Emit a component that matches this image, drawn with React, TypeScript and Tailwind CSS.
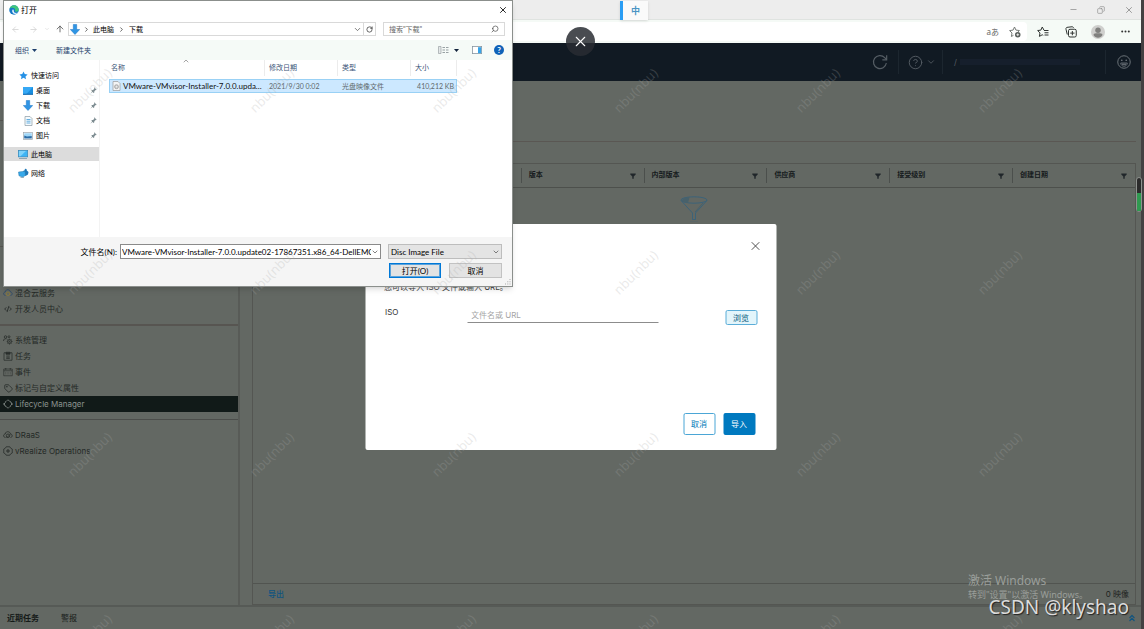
import type { ReactNode } from "react";
import {
  ArrowLeft,
  ArrowRight,
  ArrowUp,
  ChevronDown,
  ChevronRight,
  ChevronUp,
  ChevronsUp,
  CircleHelp,
  CodeXml,
  Copy,
  Minus,
  RotateCcw,
  Search,
  Tag,
  X,
} from "lucide-react";

const UI_FONT = "font-['Noto_Sans','Noto_Sans_CJK_SC',sans-serif]";
const PICKER_FONT = "font-['Lato','Noto_Sans_CJK_SC',sans-serif]";
const APP_FONT = "font-['Inter','Noto_Sans_CJK_SC',sans-serif]";

/* ---------- small drawings ---------- */

function EdgeLogo() {
  return (
    <svg viewBox="0 0 20 20" className="size-[10px]">
      <circle cx="10" cy="10" r="9.5" fill="#1478c8" />
      <path d="M1 8C2 3 6 .5 10 .5c5.500 0 9.500 4 9.500 8.500 0 3-2.500 4.500-5 4.500-2 0-3-1-2-2.500C13 8 10 5.500 7 5.500 4 5.500 2 6.500 1 8z" fill="#3fc67c" />
      <path d="M7.500 9c-2.500 3-.5 8.500 4.500 9 2.500.2 5-1.500 6-3-4 2-9 1-8.500-4 .1-1-1-2.500-2-2z" fill="#e8f6ff" />
    </svg>
  );
}

function BlueArrow() {
  return (
    <svg viewBox="0 0 10 11" className="h-[11px] w-[10px]">
      <path d="M3.300.5h3.400v5H9.700L5 10.500.3 5.500h3z" fill="#2f95e4" stroke="#1c74c4" strokeWidth=".5" />
    </svg>
  );
}

function BlueStar() {
  return (
    <svg viewBox="0 0 24 24" className="size-[9px]">
      <path d="M12 1l3.300 7.200 7.700.9-5.700 5.300 1.500 7.700L12 18.200 5.200 22l1.500-7.600L1 9.100l7.700-.9z" fill="#2691e6" />
    </svg>
  );
}

function DesktopIcon() {
  return (
    <svg viewBox="0 0 10 8" className="h-[8px] w-[10px]">
      <rect width="10" height="7.500" fill="#1b8fe0" />
      <path d="M0 0h10L3 7.500H0z" fill="#36a8f4" />
      <rect y="6.800" width="10" height=".9" fill="#0c5fa5" />
    </svg>
  );
}

function DocIcon() {
  return (
    <svg viewBox="0 0 9 10" className="h-[10px] w-[9px]">
      <path d="M1 .5h5L8 2.500v7H1z" fill="#f5fafd" stroke="#8a9ba5" strokeWidth=".7" />
      <path d="M2.500 3.500h4M2.500 5.200h4M2.500 7h4" stroke="#3f9bd8" strokeWidth=".8" />
    </svg>
  );
}

function PictureIcon() {
  return (
    <svg viewBox="0 0 10 8" className="h-[8px] w-[10px]">
      <rect x=".4" y=".4" width="9.200" height="7" fill="#fff" stroke="#9aa5ad" strokeWidth=".7" />
      <path d="M1.200 1.200h7.600V4L5 5.500 1.200 4z" fill="#9fd6f7" />
      <path d="M1.200 3.500L4 4.500l4.800-.5v2.600H1.200z" fill="#2a6da8" />
    </svg>
  );
}

function ComputerIcon() {
  return (
    <svg viewBox="0 0 10 9" className="h-[9px] w-[10px]">
      <rect x=".3" y=".3" width="9.400" height="6.600" fill="#3db4f5" stroke="#3380b0" strokeWidth=".6" />
      <path d="M1 1h7L2.500 6.300H1z" fill="#7dd2fb" />
      <path d="M1 8.500h8" stroke="#7a97a8" strokeWidth=".8" />
    </svg>
  );
}

function NetworkIcon() {
  return (
    <svg viewBox="0 0 11 10" className="h-[10px] w-[11px]">
      <path d="M5 3l1.500-.5.5-1.700 1.500.2.3 1.500L10.500 4 10 6.500 7.500 8z" fill="#2079b8" />
      <path d="M.5 4l6.500-.8.500 4.300-3 1.500L1 7.800z" fill="#37a9ea" stroke="#2a78aa" strokeWidth=".5" />
      <path d="M2.500 9.500h3.500" stroke="#7a97a8" strokeWidth=".7" />
    </svg>
  );
}

function PinIcon() {
  return (
    <svg viewBox="0 0 10 10" className="size-[7px]">
      <path d="M6 .5L9.500 4l-1 .5-.6-.2-1.800 2-.1 1.700-.9.500L2 5.400l.7-1 1.600-.1 1.900-1.900-.5-.9zM3.300 6L4 6.800.5 9.500z" fill="#7e8d92" />
    </svg>
  );
}

function IsoFileIcon() {
  return (
    <svg viewBox="0 0 9 10" className="h-[10px] w-[9px] shrink-0">
      <path d="M1 .5h5L8 2.500v7H1z" fill="#f4f4f4" stroke="#9b9b9b" strokeWidth=".7" />
      <circle cx="4.500" cy="5.700" r="2" fill="#d0d0d0" stroke="#8f8f8f" strokeWidth=".6" />
      <circle cx="4.500" cy="5.700" r=".5" fill="#fff" />
    </svg>
  );
}

function FilterGlyph() {
  return (
    <svg viewBox="0 0 6 7" className="h-[7px] w-[6px]">
      <path d="M.3 1.500h5.400v1L3.700 4.500v2.300H2.300V4.500L.3 2.500z" fill="#20262a" />
    </svg>
  );
}

function BigFunnel() {
  return (
    <svg viewBox="0 0 28 26" className="h-[26px] w-[28px]" fill="none" stroke="#3c6379" strokeWidth="1">
      <ellipse cx="14" cy="4" rx="13" ry="3.200" />
      <path d="M1 4.500l11.500 12.500v6.500h3V17L27 4.500" />
      <path d="M1.500 4.500C3 2.500 6 1.300 9.500 1.300L8 7c-3-.3-5.500-1-6.500-2.500z" fill="#48616b" stroke="none" />
      <path d="M23 7l-8 9" stroke="#48616b" />
      <path d="M10 25.500h8" stroke="#566568" strokeWidth=".6" />
    </svg>
  );
}

function StarPlus() {
  return (
    <svg viewBox="0 0 24 24" className="size-[12px]" fill="none" stroke="#6f7471" strokeWidth="1.900">
      <path d="M11 2l2.900 6.200 6.900.9-3 3M9 18.500L4.800 21l1.200-7L1.200 9.200l6.900-1L11 2" strokeLinejoin="round" />
      <circle cx="17.500" cy="17.500" r="5.500" fill="#555b58" stroke="none" />
      <path d="M17.500 14.700v5.600M14.700 17.500h5.600" stroke="#fff" strokeWidth="1.600" />
    </svg>
  );
}

function StarList() {
  return (
    <svg viewBox="0 0 24 24" className="size-[12px]" fill="none" stroke="#2f3331" strokeWidth="2" strokeLinejoin="round">
      <path d="M14 8.500L10.500 2 7.800 8.200l-6.500.9 4.700 4.700-1.200 7 5.700-3.300 2 1.200" />
      <path d="M14 9h9M15 13.500h8M15 18h8" />
    </svg>
  );
}

function CollectionsIcon() {
  return (
    <svg viewBox="0 0 24 24" className="size-[12px]" fill="none" stroke="#2f3331" strokeWidth="2">
      <path d="M4.500 17L2 6.500C1.500 4.500 2.500 3 4 2.700L14 1.500c1.500-.2 2.500.7 3 2.500" />
      <rect x="7" y="6.500" width="15.500" height="15.500" rx="3" />
      <path d="M14.700 10v8.500M10.500 14.200H19" />
    </svg>
  );
}

function AvatarIcon() {
  return (
    <svg viewBox="0 0 28 28" className="size-[14px]">
      <circle cx="14" cy="14" r="14" fill="#cfcfcd" />
      <circle cx="14" cy="10.500" r="5.500" fill="#80807e" />
      <path d="M5 20c0-3 4-3.500 9-3.500s9 .5 9 3.500c-2 3.500-5 5.500-9 5.500s-7-2-9-5.500z" fill="#80807e" />
    </svg>
  );
}

function RefreshIcon() {
  return (
    <svg viewBox="0 0 24 24" className="size-[16px]" fill="none" stroke="#555d64" strokeWidth="1.800">
      <path d="M21.500 13.500A9.700 9.700 0 1 1 19 5.500L21.800 8.500" />
      <path d="M22 2v6.800h-6.500" />
    </svg>
  );
}

function SmileIcon() {
  return (
    <svg viewBox="0 0 28 28" className="size-[14px]" fill="none" stroke="#6a7177" strokeWidth="2">
      <circle cx="14" cy="14" r="12.500" />
      <path d="M7.500 16h13c0 4-3 6.500-6.500 6.500S7.500 20 7.500 16z" strokeWidth="1.800" />
      <path d="M10 18.500h8" strokeWidth="2.500" />
      <circle cx="9.500" cy="10.500" r="1.700" fill="#6a7177" stroke="none" />
      <circle cx="18.500" cy="10.500" r="1.700" fill="#6a7177" stroke="none" />
    </svg>
  );
}

function CloudIcon({ color }: { color?: boolean }) {
  return (
    <svg viewBox="0 0 20 16" className="h-[8px] w-[10px]" fill="none" strokeWidth="1.700">
      <path d="M5 13C0 12.500 0 6.500 4.500 6 5 2 8 1 10.500 1.500 13 2 14.500 3.500 15 6c4.500.5 4.500 6.500 0 7" stroke={color ? "#2f4c6c" : "#2a2f2c"} />
      <circle cx="10" cy="9.500" r="3.500" stroke={color ? "#8a7a3a" : "#2a2f2c"} />
      {!color && <path d="M7 14l7-7" stroke="#2a2f2c" />}
    </svg>
  );
}

function AdminIcon() {
  return (
    <svg viewBox="0 0 20 20" className="size-[10px]" fill="none" stroke="#2a2f2c" strokeWidth="1.600">
      <circle cx="5" cy="4" r="2.500" />
      <circle cx="12" cy="3.500" r="2" />
      <path d="M1 12c0-4 3-5 6-4.500" />
      <circle cx="13" cy="13" r="4" />
      <circle cx="13" cy="13" r="1" />
      <path d="M13 7.500V9M13 17v2M7.500 13H9M17 13h2M9 9l1.500 1.500M17 17l-1.500-1.500M17 9l-1.500 1.500M9 17l1.500-1.500" />
    </svg>
  );
}

function TaskIcon() {
  return (
    <svg viewBox="0 0 20 20" className="size-[10px]" fill="none" stroke="#2a2f2c" strokeWidth="1.500">
      <path d="M6 3.500H2v15h16v-15h-4" />
      <path d="M6 2.500h8v4H6z" fill="#2a2f2c" />
      <path d="M6.500 10h7M6.500 12.500h7M6.500 15h7" />
    </svg>
  );
}

function EventIcon() {
  return (
    <svg viewBox="0 0 20 20" className="size-[10px]" fill="none" stroke="#2a2f2c" strokeWidth="1.300">
      <path d="M1.500 4h17v13.500h-17zM1.500 7.500h17" />
      <path d="M5.500 2v3.500M14.500 2v3.500" strokeWidth="1.800" />
      <path d="M5.500 10v5M10 10v5M14.500 10v5" stroke="#444946" />
    </svg>
  );
}

function LifecycleIcon() {
  return (
    <svg viewBox="0 0 20 20" className="size-[10px]" fill="none" stroke="#8b938f" strokeWidth="1.600">
      <path d="M8 3.500L10 1.500l3 3c2 0 2.500.7 2.200 2.300L18.500 10l-2 2M17 7l1.500 3-3.500 3.500c.5 1.500-.5 2.200-2 2.200M12 16.500l-2 2-3-3c-2 0-2.500-.7-2.200-2.300L1.500 10l2-2M3 13l-1.500-3L5 6.500C4.500 5 5.500 4.300 7 4.300" />
    </svg>
  );
}

function VRealizeIcon() {
  return (
    <svg viewBox="0 0 20 20" className="size-[10px]" fill="none" stroke="#2a2f2c" strokeWidth="1.600">
      <path d="M6.500 1.500h7l1.500 2.500 3.500 2v8L15 16l-1.500 2.500h-7L5 16l-3.500-2V6L5 4z" />
      <path d="M10 6v8M6 10h8" strokeWidth="2" />
    </svg>
  );
}

/* ---------- browser frame ---------- */

function BrowserBars() {
  return (
    <div className="shrink-0">
      <div className="flex h-5 items-center justify-end gap-1 border-b border-[#dfe3e0] bg-[#ededed] text-[#8c8c8c]">
        <button aria-label="最小化" className="flex w-6 justify-center"><Minus size={9} /></button>
        <button aria-label="还原" className="flex w-6 justify-center"><Copy size={8} className="-scale-x-100" /></button>
        <button aria-label="关闭窗口" className="flex w-6 justify-center"><X size={10} /></button>
      </div>
      <div className="flex h-[23px] items-center bg-[#f5faf6] pr-[2px]">
        <div className="flex h-[19px] flex-1 items-center justify-end rounded-r-sm bg-white">
          <button className={`${UI_FONT} px-[4px] text-[8px] leading-none text-[#666]`}>aあ</button>
          <button aria-label="添加到收藏夹" className="flex w-6 justify-center"><StarPlus /></button>
        </div>
        <div className="flex pl-[2px]">
          <button aria-label="收藏夹" className="flex w-7 items-center justify-center"><StarList /></button>
          <button aria-label="集锦" className="flex w-[27px] items-center justify-center"><CollectionsIcon /></button>
          <button aria-label="用户" className="flex w-7 items-center justify-center"><AvatarIcon /></button>
          <button aria-label="更多" className="flex w-[27px] items-center justify-center">
            <svg viewBox="0 0 9 3" className="h-[3px] w-[9px]" fill="#333">
              <circle cx="1.200" cy="1.500" r="1" />
              <circle cx="4.500" cy="1.500" r="1" />
              <circle cx="7.800" cy="1.500" r="1" />
            </svg>
          </button>
        </div>
      </div>
    </div>
  );
}

function AppHeader() {
  return (
    <header className="flex h-[38px] shrink-0 items-center justify-end bg-[#111a23] text-[#555d64]">
      <button aria-label="刷新" className="flex w-9 justify-center"><RefreshIcon /></button>
      <div className="flex h-6 w-11 items-center justify-center gap-[3px] border-l border-[#1c262f] pl-[3px]">
        <CircleHelp size={15} strokeWidth={1.5} />
        <ChevronDown size={10} />
      </div>
      <div className="flex h-6 w-[163px] items-center gap-[3px] border-l border-[#1c262f] pl-[11px] text-[8px]">
        <span>/</span>
        <span className="h-[6px] w-[120px] bg-[#161f2c]" />
      </div>
      <button aria-label="反馈" className="flex h-6 w-9 items-center justify-center border-l border-[#1c262f]">
        <SmileIcon />
      </button>
    </header>
  );
}

/* ---------- application page ---------- */

function NavItem({ icon, label, active }: { icon: ReactNode; label: string; active?: boolean }) {
  return (
    <a
      href="#"
      className={
        active
          ? "flex h-4 items-center gap-[2px] bg-[#111a18] pl-[3px] text-[#8b938f]"
          : "flex h-4 items-center gap-[2px] pl-[3px] text-[#232826]"
      }
    >
      <span className="flex w-[10px] justify-center">{icon}</span>
      <span>{label}</span>
    </a>
  );
}

function Sidebar() {
  return (
    <nav className="flex w-[240px] shrink-0 flex-col border-r-2 border-[#585b57] text-[8px] leading-4">
      <div className="h-10 border-b border-[#555551]" />
      <div className="h-[126px] border-b border-[#555551]" />
      <div className="border-b-2 border-[#575551] pt-[38px] pb-[7px]">
        <NavItem icon={<CloudIcon color />} label="混合云服务" />
        <NavItem icon={<CodeXml size={8} strokeWidth={2.5} />} label="开发人员中心" />
      </div>
      <div className="border-b border-[#4c4e4b] pt-[6px] pb-[7px]">
        <NavItem icon={<AdminIcon />} label="系统管理" />
        <NavItem icon={<TaskIcon />} label="任务" />
        <NavItem icon={<EventIcon />} label="事件" />
        <NavItem icon={<Tag size={9} />} label="标记与自定义属性" />
        <NavItem icon={<LifecycleIcon />} label="Lifecycle Manager" active />
      </div>
      <div className="pt-[7px]">
        <NavItem icon={<CloudIcon />} label="DRaaS" />
        <NavItem icon={<VRealizeIcon />} label="vRealize Operations" />
      </div>
    </nav>
  );
}

const columns = ["", "", "版本", "内部版本", "供应商", "接受级别", "创建日期"];

function ImageTable() {
  return (
    <main className="flex min-w-0 flex-1 flex-col pr-[5px] pl-3">
      <div className="h-[61px] border-b border-[#5a5753]" />
      <div className="mt-[21px] flex flex-1 flex-col border border-[#545652]">
        <table className="w-full table-fixed text-[7px]">
          <thead>
            <tr className="h-[23px] border-b border-[#4d504c]">
              <th className="w-[22px]" />
              {columns.map((name, i) => (
                <th key={i} className="p-0 text-left font-bold text-[#151a1c]">
                  <div className="flex h-[15px] items-center justify-between border-l border-[#4b4f4c] pr-[8px] pl-[7px]">
                    <span>{name}</span>
                    <FilterGlyph />
                  </div>
                </th>
              ))}
            </tr>
          </thead>
        </table>
        <div className="flex flex-1 justify-center pt-[8px]">
          <BigFunnel />
        </div>
        <div className="flex h-[21px] items-center justify-between border-t border-[#515450] pr-[6px] pl-[15px] text-[8px]">
          <a href="#" className="font-medium text-[#0f5480]">导出</a>
          <span className="text-[#1d2220]">0 映像</span>
        </div>
      </div>
    </main>
  );
}

function TaskBar() {
  return (
    <footer className="flex h-6 shrink-0 items-center gap-[22px] border-t-2 border-t-[#565a56] pr-[4px] pl-[7px] text-[8px]">
      <button className="font-bold text-[#151a18]">近期任务</button>
      <button className="text-[#151a18]">警报</button>
      <button aria-label="展开" className="ml-auto text-[#0f5480]"><ChevronsUp size={10} strokeWidth={3} /></button>
    </footer>
  );
}

/* ---------- ISO import modal ---------- */

function ImportModal() {
  return (
    <section role="dialog" className="absolute top-56 left-1/2 flex h-[226px] w-[411px] -translate-x-1/2 flex-col rounded-xs bg-white pr-[16px] pl-[19px] text-[8px] text-[#333]">
      <button aria-label="关闭" className="mt-[15px] -mr-[2px] self-end text-[#444]"><X size={14} strokeWidth={1.600} /></button>
      <p className="mt-[26px] leading-4 text-[#444]">您可以导入 ISO 文件或输入 URL。</p>
      <div className="mt-[9px] flex items-start">
        <label htmlFor="iso" className="w-[83px] pl-px leading-4">ISO</label>
        <input id="iso" placeholder="文件名或 URL" className="mt-[3px] h-4 w-[191px] border-b border-[#8c8c8c] px-1 outline-none placeholder:text-[#a5a5a5]" />
        <button className="mt-[6px] mr-[3px] ml-auto h-[15px] w-8 rounded-xs border border-[#5badd8] bg-[#e3f5fb] leading-none text-[#00567a]">浏览</button>
      </div>
      <div className="mt-auto mb-[15px] flex justify-end gap-2 pr-[5px]">
        <button className="h-[22px] w-8 rounded-xs border border-[#4ba6d6] leading-none text-[#0079b8]">取消</button>
        <button className="h-[22px] w-8 rounded-xs bg-[#0079bf] leading-none text-white">导入</button>
      </div>
    </section>
  );
}

/* ---------- file picker ---------- */

const places = [
  { icon: <DesktopIcon />, label: "桌面" },
  { icon: <BlueArrow />, label: "下载" },
  { icon: <DocIcon />, label: "文档" },
  { icon: <PictureIcon />, label: "图片" },
];

function PlacesPane() {
  return (
    <ul className="w-[96px] shrink-0 border-r border-[#f3f3f3] pt-[8px] leading-none">
      <li className="flex h-[15px] items-center gap-[3px] pl-[15px]"><BlueStar />快速访问</li>
      {places.map((place) => (
        <li key={place.label} className="flex h-[15px] items-center gap-[3px] pr-[2px] pl-[19px]">
          <span className="flex w-[10px] justify-center">{place.icon}</span>
          <span className="flex-1">{place.label}</span>
          <PinIcon />
        </li>
      ))}
      <li className="mt-1 flex h-[14px] items-center gap-[3px] bg-[#dcdcdc] pl-[14px]"><ComputerIcon />此电脑</li>
      <li className="mt-[5px] flex h-[14px] items-center gap-[2px] pl-[14px]"><NetworkIcon />网络</li>
    </ul>
  );
}

function FileTable() {
  return (
    <div className="relative flex-1 pl-[9px]">
      <ChevronUp size={8} className="absolute -top-[3px] left-[82px] text-[#777]" />
      <table className="w-[348px] table-fixed border-separate border-spacing-0 text-[7px]">
        <thead>
          <tr className="h-[19px] text-left align-top text-[#3b5578]">
            <th className="w-[156px] p-0 font-normal"><div className="h-4 border-r border-[#ececec] pl-[2px] leading-[15px]">名称</div></th>
            <th className="w-[73px] p-0 font-normal"><div className="h-4 border-r border-[#ececec] pl-[4px] leading-[15px]">修改日期</div></th>
            <th className="w-[73px] p-0 font-normal"><div className="h-4 border-r border-[#ececec] pl-[4px] leading-[15px]">类型</div></th>
            <th className="p-0 font-normal"><div className="h-4 border-r border-[#ececec] pl-[4px] leading-[15px]">大小</div></th>
          </tr>
        </thead>
        <tbody>
          <tr className="h-[14px] bg-[#cce8ff] leading-none text-[#5f686c] outline-1 -outline-offset-1 outline-[#99d1f5]">
            <td className="p-0">
              <div className="flex items-center gap-[2px] pl-[3px] text-[8px] whitespace-nowrap text-[#111]">
                <IsoFileIcon />
                VMware-VMvisor-Installer-7.0.0.upda...
              </div>
            </td>
            <td className="p-0 pl-[4px] whitespace-nowrap">2021/9/30 0:02</td>
            <td className="p-0 pl-[4px]">光盘映像文件</td>
            <td className="p-0 pr-[3px] text-right whitespace-nowrap">410,212 KB</td>
          </tr>
        </tbody>
      </table>
    </div>
  );
}

function FilePicker() {
  return (
    <section role="dialog" className={`${PICKER_FONT} absolute top-0 left-[3px] flex h-[287px] w-[510px] flex-col border border-[#8b8f8c] bg-white text-[7px] text-black shadow-md`}>
      <div className="flex h-[17px] items-center gap-[2px] pr-[4px] pl-[5px] text-[8px]">
        <EdgeLogo />
        <span>打开</span>
        <button aria-label="关闭" className="ml-auto"><X size={10} /></button>
      </div>

      <div className="flex h-[22px] items-center pr-[7px] pl-[7px]">
        <button aria-label="后退" className="text-[#cfcfcf]"><ArrowLeft size={9} /></button>
        <button aria-label="前进" className="ml-[9px] text-[#cfcfcf]"><ArrowRight size={9} /></button>
        <button aria-label="历史" className="ml-[6px] text-[#cfcfcf]"><ChevronDown size={6} /></button>
        <button aria-label="上移" className="ml-[5px] text-[#555]"><ArrowUp size={10} /></button>
        <div className="ml-[3px] flex h-[14px] flex-1 items-center border border-[#d9d9d9] pl-px">
          <BlueArrow />
          <ChevronRight size={7} className="mx-[3px]" />
          <span>此电脑</span>
          <ChevronRight size={7} className="mx-[4px]" />
          <span>下载</span>
          <ChevronDown size={9} className="mr-px ml-auto text-[#555]" />
          <button aria-label="刷新" className="flex h-full w-[12px] items-center justify-center border-l border-[#d9d9d9]"><RotateCcw size={7} className="-scale-x-100" /></button>
        </div>
        <label className="ml-[7px] flex h-[14px] w-[122px] items-center border border-[#d9d9d9] px-[5px]">
          <input aria-label="搜索" placeholder={'搜索"下载"'} className="w-full min-w-0 outline-none placeholder:text-[#666]" />
          <Search size={8} className="shrink-0 -scale-x-100 text-[#444]" />
        </label>
      </div>

      <div className="flex h-5 items-center bg-[#f5faf7] pr-[8px] pl-[11px] text-[#1e3f6c]">
        <button className="flex items-center gap-[3px]">
          组织
          <svg viewBox="0 0 5 3" className="h-[3px] w-[5px]"><path d="M0 0h5L2.500 3z" fill="#1e3f6c" /></svg>
        </button>
        <button className="ml-[19px]">新建文件夹</button>
        <svg viewBox="0 0 11 8" className="ml-auto h-[8px] w-[11px]" stroke="#8d9698" strokeWidth=".9">
          <path d="M.5.500h2.500v7H.5z" fill="#e4e8e9" strokeWidth=".6" />
          <path d="M4.500 1.500h2.500M8 1.500h2.500M4.500 4h2.500M8 4h2.500M4.500 6.500h2.500M8 6.500h2.500" />
        </svg>
        <svg viewBox="0 0 5 3" className="ml-[5px] h-[3px] w-[5px]"><path d="M0 0h5L2.500 3z" fill="#12233c" /></svg>
        <svg viewBox="0 0 10 8" className="ml-[13px] h-[8px] w-[10px]">
          <rect x=".4" y=".4" width="9.200" height="7.200" fill="#fff" stroke="#8795a0" strokeWidth=".8" />
          <rect x="6" y="1.200" width="3.200" height="6" fill="#36a3e8" />
        </svg>
        <button aria-label="帮助" className="ml-[12px] flex size-[10px] items-center justify-center rounded-full bg-[#0f62b8] text-[8px] leading-none font-bold text-white">?</button>
      </div>

      <div className="flex flex-1">
        <PlacesPane />
        <FileTable />
      </div>

      <div className="h-[49px] bg-[#f5f5f5] pt-[7px] pr-[10px]">
        <div className="flex h-[15px] items-center justify-end">
          <label htmlFor="filename" className="pr-[3px] text-[8px]">文件名(N):</label>
          <div className="flex h-[15px] w-[261px] items-center border border-[#8a8a8a] bg-white pr-[1px] pl-px">
            <input id="filename" defaultValue="VMware-VMvisor-Installer-7.0.0.update02-17867351.x86_64-DellEMC_C" className="min-w-0 flex-1 text-[8px] outline-none" />
            <ChevronDown size={8} className="text-[#444]" />
          </div>
          <div className="relative ml-[7px] flex items-center">
            <select aria-label="文件类型" className="h-[15px] w-[114px] appearance-none border border-[#bdbdbd] bg-[#e4e4e4] px-[2px] text-[8px] leading-none">
              <option>Disc Image File</option>
            </select>
            <ChevronDown size={8} className="pointer-events-none absolute right-[2px] text-[#444]" />
          </div>
        </div>
        <div className="mt-[4px] flex justify-end gap-2">
          <button className="h-[15px] w-[52px] border border-[#0078d7] bg-[#e3e3e3] text-[8px] leading-none ring-1 ring-[#0078d7]/60 ring-inset">打开(O)</button>
          <button className="h-[15px] w-[53px] border border-[#c2c2c2] bg-[#e3e3e3] text-[8px] leading-none">取消</button>
        </div>
      </div>
      <svg viewBox="0 0 6 6" className="absolute right-px bottom-px size-[6px]" fill="#a9a9a9">
        <path d="M4.500 0h1v1h-1zM4.500 2.200h1v1h-1zM2.300 2.200h1v1h-1zM4.500 4.500h1v1h-1zM2.300 4.500h1v1h-1zM0 4.500h1v1H0z" />
      </svg>
    </section>
  );
}

/* ---------- overlays ---------- */

function Watermarks() {
  return (
    <div aria-hidden="true" className="pointer-events-none absolute inset-0 grid auto-rows-[182px] grid-cols-[repeat(auto-fill,182px)] overflow-hidden">
      {Array.from({ length: 24 }, (_, i) => (
        <span key={i} className={`${UI_FONT} flex items-center justify-center pr-[3px] text-[13px] text-[#aaaaaa]/25`}>
          <span className="-rotate-45">nbu(nbu)</span>
        </span>
      ))}
    </div>
  );
}

export default function App() {
  return (
    <div className={`${APP_FONT} relative flex h-screen overflow-hidden bg-[#636863]`}>
      <div className="relative flex min-w-0 flex-1 flex-col">
        <BrowserBars />
        <AppHeader />
        <div className="flex min-h-0 flex-1">
          <Sidebar />
          <ImageTable />
        </div>
        <TaskBar />
        <ImportModal />
      </div>
      <div className="w-[3px] shrink-0 bg-[#444142]" />

      <FilePicker />

      <div className={`${UI_FONT} absolute top-px left-[620px] flex h-[19px] w-7 items-center justify-center border-l-[3px] border-[#2a9df4] bg-[#fafafa] text-[9px] font-bold text-[#4a94c4] shadow`}>中</div>
      <button aria-label="退出全屏" className="absolute top-[27px] left-[566px] flex size-[29px] items-center justify-center rounded-full bg-[#292d33]/85 text-white">
        <X size={17} strokeWidth={1.500} />
      </button>
      <div className="absolute top-[177px] right-[2px] flex h-[35px] w-[6px] flex-col justify-end rounded-sm border border-[#8f938f] bg-[#2b2b2b]">
        <div className="h-[18px] bg-[#2f9a50]" />
      </div>

      <Watermarks />

      <div className={`${UI_FONT} absolute right-[56px] bottom-[28px] text-[#9a9e9a]`}>
        <p className="text-[12px] leading-4">激活 Windows</p>
        <p className="text-[9px] leading-3">转到"设置"以激活 Windows。</p>
      </div>
      <div className={`${UI_FONT} absolute right-[15px] bottom-[10px] text-[19px] leading-6 text-[#dcdcdc] [text-shadow:1px_1px_1px_#222]`}>
        CSDN @klyshao
      </div>
    </div>
  );
}
